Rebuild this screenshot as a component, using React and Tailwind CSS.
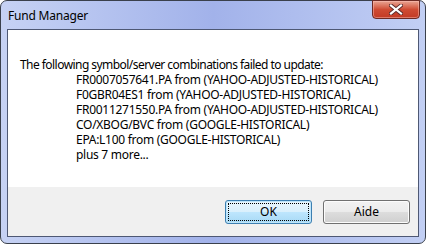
import React from 'react';

const LINES = [
  'FR0007057641.PA from (YAHOO-ADJUSTED-HISTORICAL)',
  'F0GBR04ES1 from (YAHOO-ADJUSTED-HISTORICAL)',
  'FR0011271550.PA from (YAHOO-ADJUSTED-HISTORICAL)',
  'CO/XBOG/BVC from (GOOGLE-HISTORICAL)',
  'EPA:L100 from (GOOGLE-HISTORICAL)',
  'plus 7 more...',
];

function CloseGlyph() {
  return (
    <svg width="14" height="11" viewBox="0 0 14 11">
      <path d="M2 1.5 L12 9.5 M12 1.5 L2 9.5" stroke="#5a2a2a" strokeWidth="4" strokeLinecap="square" />
      <path d="M2 1.5 L12 9.5 M12 1.5 L2 9.5" stroke="#ffffff" strokeWidth="2.2" strokeLinecap="square" />
    </svg>
  );
}

export default function App() {
  return (
    <div className="w-[426px] h-[244px] bg-white font-['Segoe_UI','Noto_Sans',sans-serif] text-[12px] text-black">
      <div className="relative flex h-full flex-col rounded-[7px] border border-[#3a404c] bg-gradient-to-r from-[#c6d2f4] via-[#a2b2ea] to-[#c2cff4] px-[6px] pb-[6px]">
        {/* Title bar */}
        <div className="flex h-[28px] items-center pl-[1px] pt-[2px] tracking-[-0.2px]">Fund Manager</div>

        {/* Close button */}
        <div className="absolute right-[5px] top-[-1px] flex h-[19px] w-[48px] items-center justify-center rounded-b-[4px] border border-[#6d2a24] bg-gradient-to-b from-[#e8a493] via-[#cf4b33] to-[#c23a25] shadow-[inset_0_0_0_1px_rgba(255,200,190,0.45)]">
          <CloseGlyph />
        </div>

        {/* Client area */}
        <div className="flex flex-1 flex-col border border-[#4e5874] bg-white">
          <div className="flex-1 pl-[12px] pt-[27px] leading-[15px]">
            <div className="tracking-[-0.55px]">The following symbol/server combinations failed to update:</div>
            {LINES.map((l) => (
              <div key={l} className="pl-[56px] tracking-[-0.28px]">{l}</div>
            ))}
          </div>
          <div className="flex h-[49px] items-start justify-end gap-[11px] bg-[#f0f0f0] pr-[8px] pt-[13px]">
            <button className="flex h-[24px] w-[87px] items-center justify-center rounded-[3px] border border-[#3c7fb1] bg-[linear-gradient(#eaf6fd_0%,#d9f0fc_50%,#bee6fd_50%,#a7d9f5_100%)] p-[2px] shadow-[inset_0_0_0_1px_#bfe5fa]">
              <span className="flex h-full w-full items-center justify-center border border-dotted border-black leading-none">OK</span>
            </button>
            <button className="flex h-[24px] w-[87px] items-center justify-center rounded-[3px] border border-[#707070] bg-[linear-gradient(#f2f2f2_0%,#ebebeb_50%,#dddddd_50%,#cfcfcf_100%)] shadow-[inset_0_0_0_1px_#fcfcfc] leading-none">
              Aide
            </button>
          </div>
        </div>
      </div>
    </div>
  );
}
